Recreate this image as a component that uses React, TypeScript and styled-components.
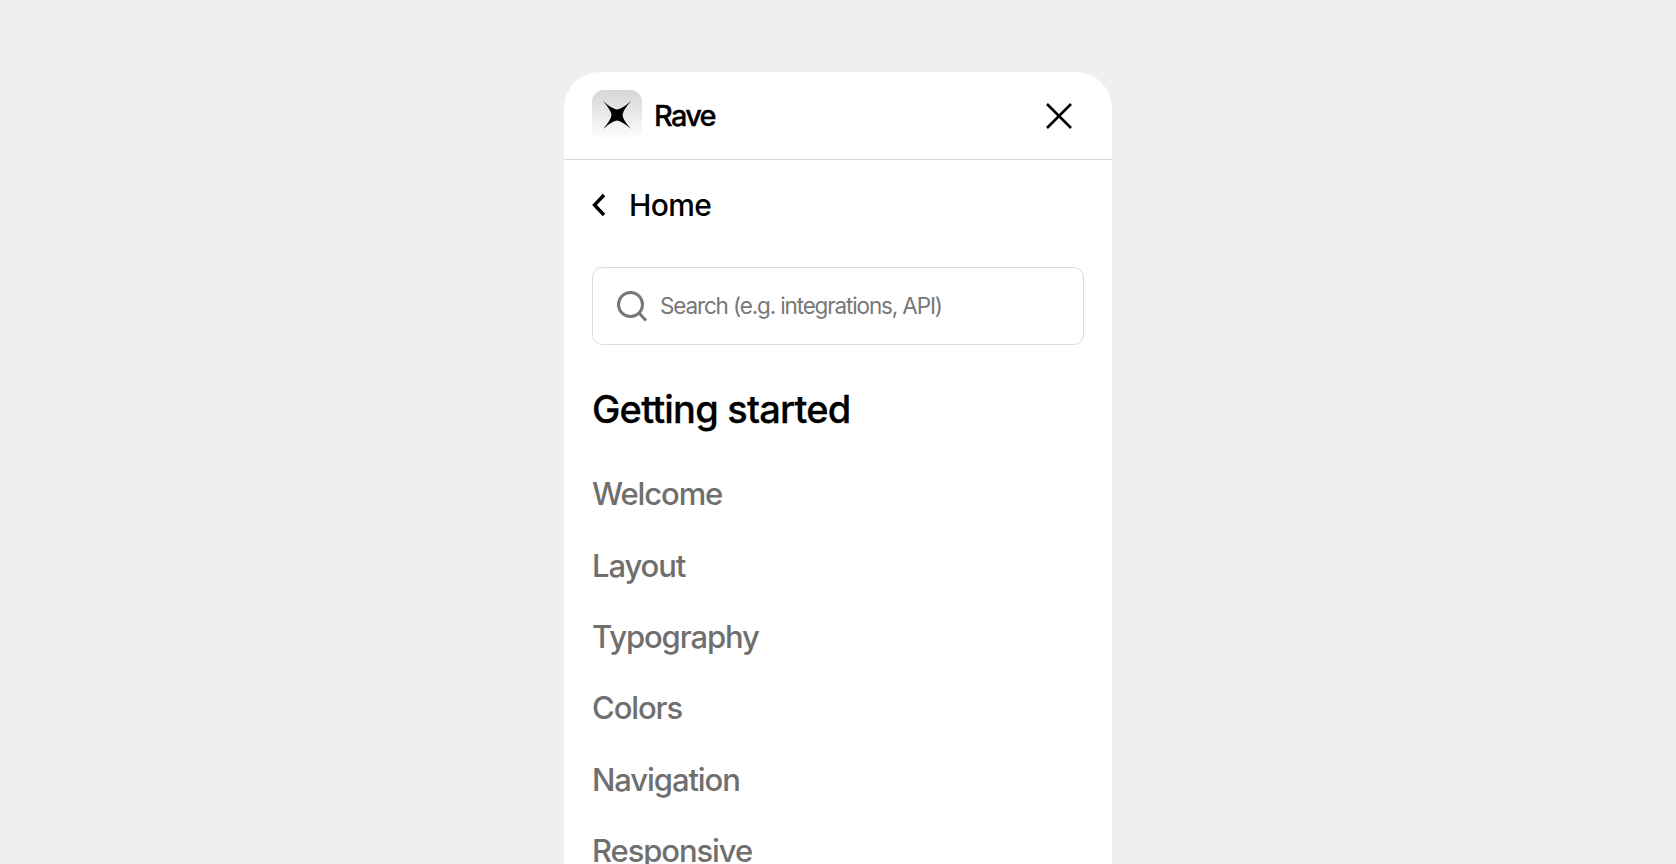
import React from "react";
import styled, { createGlobalStyle } from "styled-components";

const Global = createGlobalStyle`
  html, body { margin: 0; height: 100%; overflow: hidden; background: #efefef; }
  body { font-family: Inter, "Liberation Sans", sans-serif; }
`;
const Page = styled.div`
  height: 864px;
  overflow: hidden;
  display: flex;
  justify-content: center;
  padding-top: 72px;
  box-sizing: border-box;
`;
const Panel = styled.div`
  width: 548px;
  height: 900px;
  flex: none;
  background: #fff;
  border-radius: 36px 36px 0 0;
  overflow: hidden;
`;
const Header = styled.header`
  height: 88px;
  box-sizing: border-box;
  padding: 0 39.5px 0 28px;
  border-bottom: 1px solid #d9d9d9;
  display: flex;
  align-items: center;
  justify-content: space-between;
`;
const Brand = styled.div`
  display: flex;
  align-items: center;
  gap: 12px;
  margin-top: -1px;
`;
const LogoBox = styled.div`
  width: 50px;
  height: 50px;
  border-radius: 12px;
  background: linear-gradient(180deg, #d6d6d6 0%, #ffffff 100%);
  display: flex;
  align-items: center;
  justify-content: center;
`;
const BrandName = styled.span`
  font-size: 29px;
  font-weight: 500;
  letter-spacing: -1.75px;
  color: #000;
  margin-top: 1px;
  -webkit-text-stroke: 0.3px #000;
`;
const IconButton = styled.button`
  border: 0;
  background: none;
  padding: 0;
  display: flex;
  color: #000;
`;
const Body = styled.div`
  padding: 0 28px;
`;
const BackRow = styled.div`
  height: 89px;
  display: flex;
  align-items: center;
  gap: 23px;
  font-size: 30px;
  font-weight: 500;
  letter-spacing: -0.65px;
  color: #000;
`;
const Search = styled.div`
  margin-top: 18px;
  height: 77.5px;
  border: 1.5px solid #dcdcdc;
  border-radius: 10px;
  display: flex;
  align-items: center;
  gap: 12px;
  padding-left: 23px;
  box-sizing: border-box;
  color: #777;
  font-size: 22.5px;
  letter-spacing: -1.15px;
`;
const Title = styled.h2`
  margin: 41.5px 0 0;
  font-size: 38px;
  line-height: 46px;
  font-weight: 500;
  letter-spacing: -0.8px;
  color: #000;
  -webkit-text-stroke: 0.3px #000;
`;
const NavList = styled.ul`
  list-style: none;
  margin: 26px 0 0;
  padding: 0;
`;
const NavItem = styled.li`
  height: 71.4px;
  display: flex;
  align-items: center;
  font-size: 31px;
  font-weight: 500;
  letter-spacing: -1.1px;
  color: #6f6f6f;
`;

const items = ["Welcome", "Layout", "Typography", "Colors", "Navigation", "Responsive"];

export default function App() {
  return (
    <Page>
      <Global />
      <Panel>
        <Header>
          <Brand>
            <LogoBox>
              <svg width="28" height="28" viewBox="0 0 28 28" fill="#000">
                <path d="M0 0Q9 8 14 8.500Q19 8 28 0Q20 9 19.500 14Q20 19 28 28Q19 20 14 19.500Q9 20 0 28Q8 19 8.500 14Q8 9 0 0Z" />
              </svg>
            </LogoBox>
            <BrandName>Rave</BrandName>
          </Brand>
          <IconButton aria-label="Close">
            <svg width="28" height="28" viewBox="0 0 28 28" fill="none" stroke="currentColor" strokeWidth="2.600">
              <path d="M2 2L26 26M26 2L2 26" />
            </svg>
          </IconButton>
        </Header>
        <Body>
          <BackRow>
            <svg width="14" height="24" viewBox="0 0 14 24" fill="none" stroke="currentColor" strokeWidth="3.400">
              <path d="M12 2L2.500 12L12 22" />
            </svg>
            Home
          </BackRow>
          <Search>
            <svg width="32" height="32" viewBox="0 0 32 32" fill="none" stroke="currentColor" strokeWidth="3">
              <circle cx="14.500" cy="14.500" r="12" />
              <path d="M23.500 23.500L30 30.500" />
            </svg>
            Search (e.g. integrations, API)
          </Search>
          <Title>Getting started</Title>
          <NavList>
            {items.map((t) => (
              <NavItem key={t}>{t}</NavItem>
            ))}
          </NavList>
        </Body>
      </Panel>
    </Page>
  );
}
